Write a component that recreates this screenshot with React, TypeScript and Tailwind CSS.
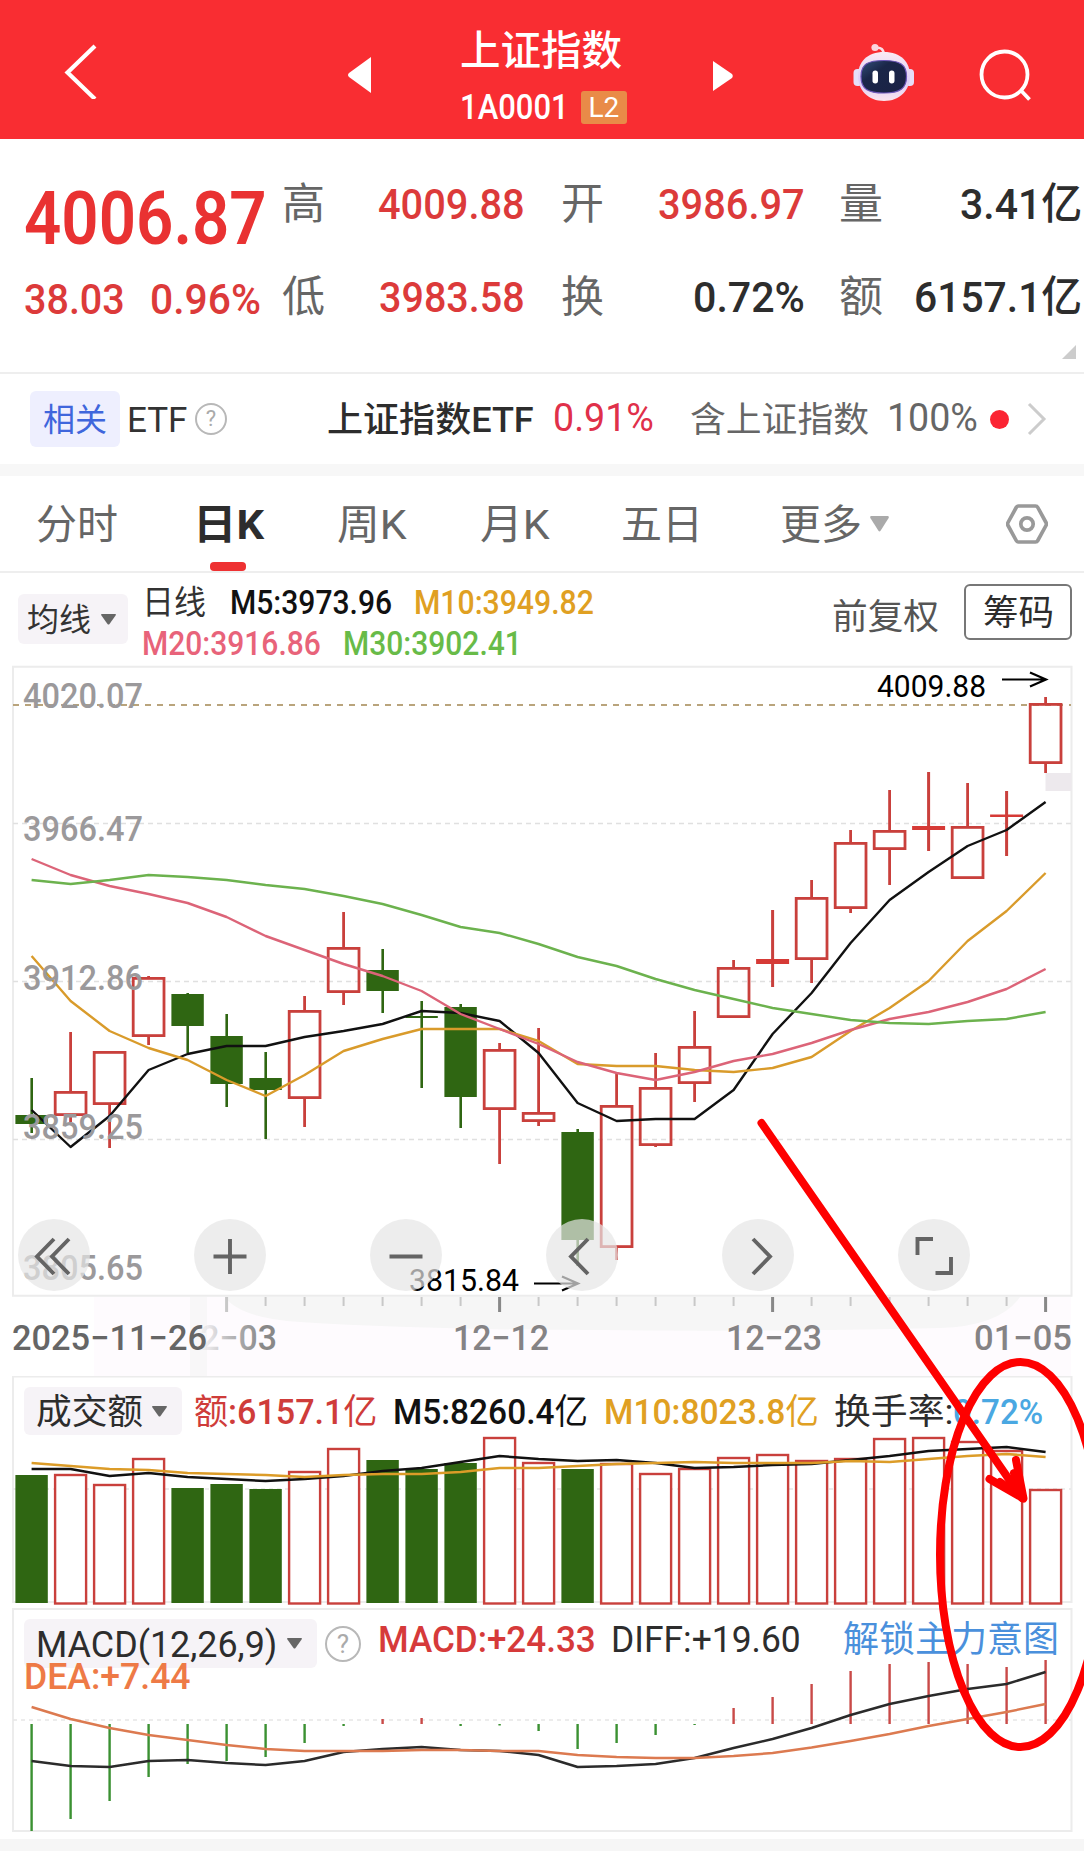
import { useLayoutEffect, useRef, type ReactNode } from "react";

const STEP = 39;
const FIRST = 31.6;
const RED = "#c9403c";
const GREEN = "#2f6612";
const FONT = "Roboto, 'Noto Sans CJK SC', sans-serif";

const cx = (i: number) => FIRST + i * STEP;
const toPoints = (ys: number[]) => ys.map((y, i) => `${cx(i)},${y}`).join(" ");

// [up, high, top, bottom, low]
const CANDLES: [boolean, number, number, number, number][] = [
  [false, 1078, 1115, 1124, 1133],
  [true, 1032, 1091, 1116, 1122],
  [true, 1051, 1051, 1105, 1148],
  [true, 976, 977, 1037, 1045],
  [false, 993, 994, 1026, 1053],
  [false, 1014, 1036, 1084, 1107],
  [false, 1052, 1078, 1090, 1139],
  [true, 996, 1010, 1099, 1127],
  [true, 912, 947, 993, 1005],
  [false, 949, 970, 991, 1013],
  [false, 1001, 1016, 1018, 1088],
  [false, 1004, 1007, 1097, 1128],
  [true, 1043, 1049, 1110, 1164],
  [true, 1028, 1112, 1122, 1126],
  [false, 1129, 1132, 1240, 1266],
  [true, 1072, 1105, 1248, 1260],
  [true, 1053, 1087, 1146, 1147],
  [true, 1011, 1046, 1084, 1102],
  [true, 960, 967, 1018, 1018],
  [true, 910, 959, 964, 987],
  [true, 880, 897, 960, 983],
  [true, 830, 842, 909, 913],
  [true, 790, 830, 850, 885],
  [true, 772, 826, 830, 851],
  [true, 783, 826, 879, 879],
  [true, 791, 814.5, 817, 856],
  [true, 697, 703, 764, 773],
];

const MA5 = [1110, 1147, 1116, 1070, 1054, 1046, 1046, 1037, 1031, 1024, 1011, 1013, 1021, 1053, 1103, 1121, 1119, 1119, 1090, 1034, 993, 943, 900, 872, 846, 830, 802];
const MA10 = [956, 1001, 1031, 1048, 1060, 1080, 1096, 1075, 1051, 1039, 1029, 1029, 1029, 1041, 1064, 1066, 1066, 1070, 1072, 1068, 1057, 1031, 1008, 981, 941, 911, 873];
const MA20 = [859, 875, 886, 894, 903, 917, 936, 950, 964, 976, 991, 1014, 1029, 1044, 1062, 1073, 1080, 1072, 1061, 1054, 1043, 1030, 1019, 1012, 1002, 989, 969];
const MA30 = [880, 884, 880, 875, 877, 880, 885, 889, 896, 904, 915, 927, 933, 944, 957, 966, 979, 990, 999, 1008, 1014, 1020, 1023, 1024, 1021, 1019, 1012];

const VOLUME = [1475, 1474, 1484, 1458, 1488, 1484, 1489, 1471, 1448, 1460, 1469, 1463, 1437, 1462, 1469, 1463, 1473, 1468, 1457, 1454, 1460, 1458, 1438, 1437, 1441, 1450, 1489];
const VOL5 = [1469, 1469, 1476, 1473, 1477, 1479, 1481, 1479, 1476, 1471, 1468, 1462, 1456, 1459, 1461, 1460, 1463, 1468, 1467, 1465, 1464, 1460, 1456, 1451, 1449, 1447, 1452];
const VOL10 = [1463, 1466, 1469, 1470, 1473, 1474, 1475, 1477, 1475, 1474, 1474, 1472, 1468, 1468, 1466, 1464, 1463, 1462, 1463, 1463, 1463, 1461, 1462, 1459, 1456, 1454, 1457];

const MACD = [1831, 1819, 1801, 1777, 1764, 1761, 1757, 1743, 1726, 1719, 1718, 1726, 1725.5, 1731, 1749, 1743, 1735, 1725, 1708, 1697, 1684, 1671, 1664, 1662, 1664, 1667, 1660];
const DIFF = [1761, 1766, 1767, 1761, 1760, 1763, 1765, 1761, 1752, 1749, 1747, 1750, 1751, 1755, 1767, 1766, 1764, 1758, 1748, 1739, 1728, 1715, 1704, 1696, 1689, 1684, 1672];
const DEA = [1707, 1719, 1728, 1735, 1740, 1745, 1749, 1751, 1751, 1751, 1750, 1750, 1751, 1751, 1755, 1757, 1758, 1758, 1756, 1753, 1747.5, 1741, 1734, 1726, 1719, 1712, 1704];

// Squeezes its text horizontally to the width of the box.
function Fit({ className, children }: { className: string; children: ReactNode }) {
  const box = useRef<HTMLSpanElement>(null);
  const inner = useRef<HTMLSpanElement>(null);

  useLayoutEffect(() => {
    if (!box.current || !inner.current) return;
    inner.current.style.transform = `scaleX(${box.current.clientWidth / inner.current.offsetWidth})`;
  });

  return (
    <span ref={box} className={`block shrink-0 leading-none whitespace-nowrap ${className}`}>
      <span ref={inner} className="inline-block origin-left leading-none">
        {children}
      </span>
    </span>
  );
}

function Caret({ className }: { className: string }) {
  return (
    <svg viewBox="0 0 18 14" preserveAspectRatio="none" className={`shrink-0 ${className}`}>
      <path d="M1 0h16q1.500 .5.5 2L10 13q-1 1-2 0L.5 2Q-.5.5 1 0z" fill="currentColor" />
    </svg>
  );
}

function Help({ className }: { className: string }) {
  return (
    <span className={`flex shrink-0 items-center justify-center rounded-full border-2 border-[#b8b8b8] leading-none text-[#aaa] ${className}`}>
      ?
    </span>
  );
}

function Robot() {
  return (
    <svg viewBox="0 0 62 60" className="mt-[43px] ml-[120px] h-[60px] w-[62px] shrink-0 self-start">
      <defs>
        <linearGradient id="shell" x1="0" y1="0" x2="0" y2="1">
          <stop offset="0" stopColor="#fbeaf3" />
          <stop offset="0.6" stopColor="#dccdf7" />
          <stop offset="1" stopColor="#fbe4ee" />
        </linearGradient>
        <linearGradient id="visor" x1="0" y1="0" x2="1" y2="1">
          <stop offset="0" stopColor="#33507a" />
          <stop offset="0.350" stopColor="#1a2649" />
          <stop offset="1" stopColor="#1b2144" />
        </linearGradient>
      </defs>
      <path d="M22 5q9-2 9 8" fill="none" stroke="#fbdde6" strokeWidth="2.500" />
      <circle cx="22" cy="4.500" r="3.600" fill="#fbd5de" />
      <rect x="0.500" y="26" width="9" height="17" rx="4" fill="#e6def8" />
      <rect x="52" y="26" width="9" height="17" rx="4" fill="#e6def8" />
      <path d="M31 9C48 9 57 19 57 33S47 58 31 58 5 47 5 33 14 9 31 9z" fill="url(#shell)" />
      <path d="M31 17.500c16 0 22.500 4 22.500 16S47 50 31 50 8 46 8 33.500s7-16 23-16z" fill="url(#visor)" stroke="#6b55b8" strokeWidth="1.200" />
      <rect x="19.500" y="27.500" width="5.500" height="13" rx="2.700" fill="#fff" />
      <rect x="36" y="27.500" width="5.500" height="13" rx="2.700" fill="#fff" />
    </svg>
  );
}

function Header() {
  return (
    <header className="flex h-[139px] items-center bg-[#f92d32] text-white">
      <svg viewBox="0 0 36 60" className="-mt-px ml-[62px] h-[60px] w-9 shrink-0" fill="none" stroke="currentColor" strokeWidth="4.200">
        <path d="M33 7 5.500 33.500 33 60" />
      </svg>
      <svg viewBox="0 0 23 36" className="mt-[10px] ml-[250px] h-9 w-[23px] shrink-0" fill="currentColor">
        <path d="M23 0v36L1 20q-2-2 0-4z" />
      </svg>
      <div className="ml-[89px] flex w-[169px] shrink-0 flex-col pt-[17px]">
        <Fit className="w-[162px] text-[41px] font-medium">上证指数</Fit>
        <div className="mt-[18px] flex items-center">
          <Fit className="w-[109px] text-[35px] font-medium">1A0001</Fit>
          <span className="ml-3 flex h-[33px] w-[46px] items-center justify-center rounded-[3px] bg-[#e98b48]">
            <Fit className="w-[31px] text-[28px]">L2</Fit>
          </span>
        </div>
      </div>
      <svg viewBox="0 0 20 30" className="mt-3 ml-[84px] h-[30px] w-5 shrink-0" fill="currentColor">
        <path d="M0 0v30L19 17q1.500-2 0-4z" />
      </svg>
      <Robot />
      <svg viewBox="0 0 56 56" className="mt-3 ml-[62px] h-14 w-14 shrink-0" fill="none" stroke="currentColor" strokeWidth="3.800">
        <circle cx="27.500" cy="26.500" r="23" />
        <path d="m43.500 42 9 9.500" />
      </svg>
    </header>
  );
}

function Quote() {
  return (
    <section className="relative flex h-[235px] border-b-2 border-[#eee] text-[#dc3a3a]">
      <div className="ml-6 w-[258px] shrink-0">
        <Fit className="mt-[43px] w-[243px] text-[74px] font-semibold text-[#e93232]">4006.87</Fit>
        <div className="mt-[22px] flex text-[43px] font-medium">
          <Fit className="w-[101px]">38.03</Fit>
          <Fit className="ml-[25px] w-[111px]">0.96%</Fit>
        </div>
      </div>
      <div className="flex w-[802px] flex-col gap-[50px] pt-[44px] text-[43px] font-medium">
        <div className="flex">
          <Fit className="w-[43px] font-normal text-[#666]">高</Fit>
          <Fit className="ml-[53px] w-[147px]">4009.88</Fit>
          <Fit className="ml-[36px] w-[43px] font-normal text-[#666]">开</Fit>
          <Fit className="ml-[54px] w-[147px]">3986.97</Fit>
          <Fit className="ml-[34px] w-[44px] font-normal text-[#666]">量</Fit>
          <Fit className="ml-[77px] w-[122px] text-[#2d2d2d]">3.41亿</Fit>
        </div>
        <div className="flex">
          <Fit className="w-[43px] font-normal text-[#666]">低</Fit>
          <Fit className="ml-[54px] w-[146px]">3983.58</Fit>
          <Fit className="ml-[36px] w-[43px] font-normal text-[#666]">换</Fit>
          <Fit className="ml-[89px] w-[112px] text-[#2d2d2d]">0.72%</Fit>
          <Fit className="ml-[34px] w-[44px] font-normal text-[#666]">额</Fit>
          <Fit className="ml-[31px] w-[168px] text-[#2d2d2d]">6157.1亿</Fit>
        </div>
      </div>
      <svg viewBox="0 0 14 14" className="absolute right-2 bottom-[13px] size-3.5">
        <path d="M14 0v14H0z" fill="#ccc" />
      </svg>
    </section>
  );
}

function Related() {
  return (
    <section className="flex h-[90px] items-center text-[35px] text-[#666]">
      <span className="ml-[30px] flex h-14 w-[90px] shrink-0 items-center justify-center rounded-md bg-[#eeeffe]">
        <Fit className="w-16 pt-0.5 text-[32px] text-[#3f66dc]">相关</Fit>
      </span>
      <Fit className="ml-[7px] w-[60px] pt-0.5 text-[#333]">ETF</Fit>
      <Help className="ml-[8px] size-8 text-[22px]" />
      <Fit className="ml-[100px] w-[207px] pt-0.5 font-medium text-[#2d2d2d]">上证指数ETF</Fit>
      <Fit className="ml-[19px] w-[101px] pb-0.5 text-[38px] text-[#e0304a]">0.91%</Fit>
      <Fit className="ml-[36px] w-[179px] pt-0.5">含上证指数</Fit>
      <Fit className="ml-[18px] w-[91px] pb-0.5 text-[38px]">100%</Fit>
      <span className="ml-[12px] size-[19px] shrink-0 rounded-full bg-[#fb2433]" />
      <svg viewBox="0 0 20 34" className="ml-[18px] h-[34px] w-5 shrink-0" fill="none" stroke="#ccc" strokeWidth="3">
        <path d="m2 2 15 15L2 32" />
      </svg>
    </section>
  );
}

function Tabs() {
  return (
    <nav className="flex h-[97px] items-center border-b-2 border-[#eee] text-[41px] text-[#666]">
      <Fit className="ml-[36px] w-[82px] pt-[3px]">分时</Fit>
      <span className="relative ml-[75px] flex h-full shrink-0 items-center font-bold text-[#2d2d2d]">
        <Fit className="w-[71px] pt-[3px]">日K</Fit>
        <span className="absolute bottom-0 left-[17px] h-[9px] w-9 rounded-[4px] bg-[#ee3132]" />
      </span>
      <Fit className="ml-[73px] w-[70px] pt-[3px]">周K</Fit>
      <Fit className="ml-[73px] w-[70px] pt-[3px]">月K</Fit>
      <Fit className="ml-[71px] w-[82px] pt-[3px]">五日</Fit>
      <Fit className="ml-[77px] w-[82px] pt-[3px]">更多</Fit>
      <Caret className="ml-[8px] h-4 w-[19px] text-[#aaa]" />
      <svg viewBox="0 0 42 40" className="ml-[117px] h-10 w-[42px] shrink-0" fill="none" stroke="#999" strokeWidth="3.700">
        <path d="M12.500 2h17q1.500 0 2.300 1.500L40 18.500q.8 1.500 0 3l-8.200 15q-.8 1.500-2.300 1.500h-17q-1.500 0-2.300-1.500L2 21.500q-.8-1.500 0-3l8.200-15Q11 2 12.500 2z" />
        <circle cx="21" cy="20" r="6.200" />
      </svg>
    </nav>
  );
}

function Legend() {
  return (
    <section className="flex h-[93px] text-[33px]">
      <span className="mt-[21px] ml-[18px] flex h-[50px] w-[110px] shrink-0 items-center rounded-md bg-[#f6f3f7]">
        <Fit className="ml-[9px] w-16 pt-0.5 text-[32px] text-[#333]">均线</Fit>
        <Caret className="ml-[10px] h-[11px] w-[15px] text-[#666]" />
      </span>
      <div className="ml-[14px] w-[690px] shrink-0 pt-[13px]">
        <div className="flex">
          <Fit className="w-[64px] text-[#333]">日线</Fit>
          <Fit className="ml-[24px] w-[162px] font-medium text-[#111]">M5:3973.96</Fit>
          <Fit className="ml-[22px] w-[180px] font-medium text-[#e0a022]">M10:3949.82</Fit>
        </div>
        <div className="mt-[8px] flex">
          <Fit className="w-[179px] font-medium text-[#e8637a]">M20:3916.86</Fit>
          <Fit className="ml-[22px] w-[179px] font-medium text-[#68bb48]">M30:3902.41</Fit>
        </div>
      </div>
      <Fit className="mt-[27px] w-[107px] text-[35px] text-[#555]">前复权</Fit>
      <span className="mt-[11px] ml-[25px] flex h-14 w-[108px] shrink-0 items-center justify-center rounded-md border-2 border-[#777] text-[#2d2d2d]">
        <Fit className="w-[71px] pt-[3px] text-[35px]">筹码</Fit>
      </span>
    </section>
  );
}

function Candle({ i }: { i: number }) {
  const [up, high, top, bottom, low] = CANDLES[i];
  const x = cx(i);
  if (!up) {
    return (
      <g fill={GREEN}>
        <rect x={x - 1.200} y={high} width="2.600" height={low - high} />
        <rect x={x - 16.200} y={top} width="32.400" height={bottom - top} />
      </g>
    );
  }
  if (bottom - top < 6) {
    return (
      <g fill="#d63a36">
        <rect x={x - 1.500} y={high} width="3" height={low - high} fill={RED} />
        <rect x={x - 16.500} y={top} width="33" height={bottom - top} />
      </g>
    );
  }
  return (
    <g fill="none" stroke={RED} strokeWidth="2.800">
      <path d={`M${x} ${high}V${top + 1}M${x} ${bottom - 1}V${low}`} />
      <rect x={x - 15.400} y={top + 1.400} width="30.800" height={bottom - top - 2.800} />
    </g>
  );
}

const PRICE_LABELS: [string, number][] = [
  ["4020.07", 708],
  ["3966.47", 841],
  ["3912.86", 990],
  ["3859.25", 1139],
  ["3805.65", 1280],
];

function PriceChart() {
  return (
    <svg viewBox="0 665 1084 711" className="absolute inset-0 h-[711px] w-[1084px]" fontFamily={FONT}>
      <defs>
        <linearGradient id="fade" gradientUnits="userSpaceOnUse" x1="195" y1="0" x2="285" y2="0">
          <stop offset="0" stopColor="#888" stopOpacity="0" />
          <stop offset="0.120" stopColor="#888" stopOpacity="0.120" />
          <stop offset="0.400" stopColor="#888" stopOpacity="0.600" />
          <stop offset="0.750" stopColor="#888" />
        </linearGradient>
      </defs>
      <rect x="94" y="1297" width="977" height="79" fill="#fefbfe" />
      <path d="M225 1297H1020Q1000 1326 940 1328Q760 1332 600 1330Q430 1330 300 1322Q240 1318 225 1297z" fill="#f6f6f6" />
      <path d="M190 1297h17v79h-17z" fill="#f8f7f8" />
      <path d="M13 666.700H1071.500V1295.700H13z" fill="#fff" stroke="#ececec" strokeWidth="2" />

      <g stroke="#e0e0e0" strokeWidth="1.300" strokeDasharray="5 4">
        <path d="M13 823.500H1071M13 981.500H1071M13 1139.500H1071" />
      </g>
      <path d="M13 705H1071" stroke="#b9a47c" strokeWidth="2" strokeDasharray="6 6" />
      <rect x="1045.500" y="773" width="26" height="18" fill="#ede9ed" />

      {CANDLES.map((_, i) => (
        <Candle key={i} i={i} />
      ))}

      <g fill="none" strokeWidth="2.400" strokeLinejoin="round">
        <polyline points={toPoints(MA5)} stroke="#111" />
        <polyline points={toPoints(MA10)} stroke="#d99b2b" />
        <polyline points={toPoints(MA20)} stroke="#dc6478" />
        <polyline points={toPoints(MA30)} stroke="#6cb24e" />
      </g>

      <g fontSize="35" fontWeight="500" fill="#9b999b">
        {PRICE_LABELS.map(([text, y]) => (
          <text key={text} x="23" y={y} textLength="120" lengthAdjust="spacingAndGlyphs">
            {text}
          </text>
        ))}
      </g>

      <g fontSize="31" fill="#000">
        <text x="877" y="697" textLength="109" lengthAdjust="spacingAndGlyphs">4009.88</text>
        <text x="409" y="1291" textLength="110" lengthAdjust="spacingAndGlyphs">3815.84</text>
      </g>
      <g fill="none" stroke="#000" strokeWidth="2.200">
        <path d="M1002 679.500H1045M1030 672.500l16 7-16 7" />
        <path d="M534 1283.500H577M562 1276.500l16 7-16 7" />
      </g>

      {CANDLES.map((_, i) => {
        if (i < 5) return null;
        const major = i % 7 === 5;
        return (
          <rect
            key={i}
            x={cx(i) - (major ? 1.500 : 1)}
            y="1297"
            width={major ? 3 : 2}
            height={major ? 15 : 9}
            fill={major && i > 5 ? "#888" : "#c8c8c8"}
          />
        );
      })}
      <g fontSize="35" fill="#858385" fontWeight="500">
        <text x="181" y="1350" textLength="96" fill="url(#fade)" lengthAdjust="spacingAndGlyphs">12−03</text>
        <text x="453" y="1350" textLength="96" lengthAdjust="spacingAndGlyphs">12−12</text>
        <text x="726" y="1350" textLength="96" lengthAdjust="spacingAndGlyphs">12−23</text>
        <text x="974" y="1350" textLength="98" lengthAdjust="spacingAndGlyphs">01−05</text>
        <text x="12" y="1350" textLength="195" fill="#666" lengthAdjust="spacingAndGlyphs">2025−11−26</text>
      </g>
    </svg>
  );
}

const TOOLS = [
  "M36 20 19 37.500 36 55M51 20 34 37.500 51 55",
  "M36 20v35M19.500 37.500h33",
  "M19.500 37.500h33",
  "M42 20 25 37.500 42 55",
  "M31 20 48 37.500 31 55",
  "M19.500 36V20H35M53 38v16H37.500",
];

function PriceSection() {
  return (
    <section className="relative h-[711px]">
      <PriceChart />
      <div className="absolute top-[554px] left-[18px] flex gap-[104px]">
        {TOOLS.map((d) => (
          <button key={d} className="size-[72px] rounded-full bg-[#e6e6e6]/70">
            <svg viewBox="0 0 72 72" className="size-[72px]" fill="none" stroke="#646464" strokeWidth="3.900">
              <path d={d} />
            </svg>
          </button>
        ))}
      </div>
    </section>
  );
}

function VolumeSection() {
  return (
    <section className="relative h-[232px]">
      <svg viewBox="0 1376 1084 232" className="absolute inset-0 h-[232px] w-[1084px]">
        <path d="M13 1376.500H1071.500V1602H13z" fill="none" stroke="#ececec" strokeWidth="2" />
        <path d="M13 1489H1071" stroke="#e6e6e6" strokeWidth="1.500" strokeDasharray="4 4" />
        {VOLUME.map((y, i) =>
          CANDLES[i][0] ? (
            <rect key={i} x={cx(i) - 15.500} y={y + 1} width="31" height={1602.500 - y} fill="#fff" stroke={RED} strokeWidth="2.400" />
          ) : (
            <rect key={i} x={cx(i) - 16.200} y={y} width="32.400" height={1603 - y} fill={GREEN} />
          ),
        )}
        <g fill="none" strokeWidth="2.500" strokeLinejoin="round">
          <polyline points={toPoints(VOL5)} stroke="#111" />
          <polyline points={toPoints(VOL10)} stroke="#dc9c28" />
        </g>
      </svg>
      <div className="relative flex h-[70px] items-center text-[35px]">
        <span className="ml-6 flex h-12 w-[158px] shrink-0 items-center rounded-md bg-[#f6f3f7]">
          <Fit className="ml-3 w-[107px] pt-0.5 text-[#2d2d2d]">成交额</Fit>
          <Caret className="ml-[9px] h-[11px] w-[15px] text-[#666]" />
        </span>
        <Fit className="ml-[12px] w-[183px] pt-0.5 text-[#cf3c3a]">
          额<span className="font-medium">:6157.1</span>亿
        </Fit>
        <Fit className="ml-[16px] w-[195px] pt-0.5 text-[#111]">
          <span className="font-medium">M5:8260.4</span>亿
        </Fit>
        <Fit className="ml-[16px] w-[215px] pt-0.5 text-[#e0a022]">
          <span className="font-medium">M10:8023.8</span>亿
        </Fit>
        <Fit className="ml-[15px] w-[119px] pt-0.5 text-[#2d2d2d]">换手率:</Fit>
        <Fit className="w-[90px] pt-0.5 font-medium text-[#4aa8e2]">0.72%</Fit>
      </div>
    </section>
  );
}

function MacdSection() {
  return (
    <section className="relative h-[231px]">
      <svg viewBox="0 1608 1084 231" className="absolute inset-0 h-[231px] w-[1084px]">
        <path d="M13 1609H1071.500V1831H13z" fill="none" stroke="#ececec" strokeWidth="2" />
        <path d="M13 1720H1071" stroke="#e6e6e6" strokeWidth="1.500" strokeDasharray="4 4" />
        {MACD.map((y, i) => (
          <rect
            key={i}
            x={cx(i) - 1.200}
            y={Math.min(y, 1724)}
            width="2.400"
            height={Math.abs(y - 1724)}
            fill={y > 1724 ? "#3b9132" : "#c94a48"}
          />
        ))}
      </svg>
      <div className="relative pt-[11px] text-[36px]">
        <div className="flex h-[50px] items-start">
          <span className="ml-6 flex h-[49px] w-[293px] shrink-0 items-center rounded-md bg-[#f6f3f7]">
            <Fit className="ml-[12px] w-[241px] pt-[3px] text-[#2d2d2d]">MACD(12,26,9)</Fit>
            <Caret className="ml-[10px] h-[11px] w-[15px] text-[#666]" />
          </span>
          <Help className="mt-[7px] ml-[8px] size-9 text-[26px]" />
          <Fit className="ml-[17px] w-[218px] pt-[3px] font-medium text-[#d63a3a]">MACD:+24.33</Fit>
          <Fit className="ml-[15px] w-[190px] pt-[3px] text-[#2d2d2d]">DIFF:+19.60</Fit>
          <Fit className="ml-[42px] w-[216px] pt-[3px] text-[#4a90dc]">解锁主力意图</Fit>
        </div>
        <Fit className="-mt-[10px] ml-[24px] w-[167px] font-medium text-[#ee7a46]">DEA:+7.44</Fit>
      </div>
      <svg viewBox="0 1608 1084 231" className="absolute inset-0 h-[231px] w-[1084px]" fill="none" strokeWidth="2.500" strokeLinejoin="round">
        <polyline points={toPoints(DIFF)} stroke="#2b2b2b" />
        <polyline points={toPoints(DEA)} stroke="#dc7a50" />
      </svg>
    </section>
  );
}

// Hand-drawn marker strokes over the last bars.
function Marker() {
  return (
    <svg
      viewBox="0 0 1084 1867"
      className="pointer-events-none absolute inset-0 h-[1867px] w-[1084px]"
      fill="none"
      stroke="#fe0000"
      strokeWidth="8"
      strokeLinecap="round"
      strokeLinejoin="round"
    >
      <ellipse cx="1020.500" cy="1554.500" rx="80.500" ry="192.500" />
      <path d="M761.500 1123 1022 1498" />
      <path d="M989.500 1479 1023.500 1498.500 1016 1460M1000 1482l22 15-8-24" />
    </svg>
  );
}

export default function App() {
  return (
    <div className="relative h-[1867px] w-[1084px] overflow-hidden bg-white font-[Roboto,'Noto_Sans_CJK_SC',sans-serif]">
      <Header />
      <Quote />
      <Related />
      <div className="h-3 bg-[#f7f7f7]" />
      <Tabs />
      <Legend />
      <div className="-mt-px">
        <PriceSection />
      </div>
      <VolumeSection />
      <MacdSection />
      <div className="h-3 bg-[#f6f6f6]" />
      <Marker />
    </div>
  );
}
